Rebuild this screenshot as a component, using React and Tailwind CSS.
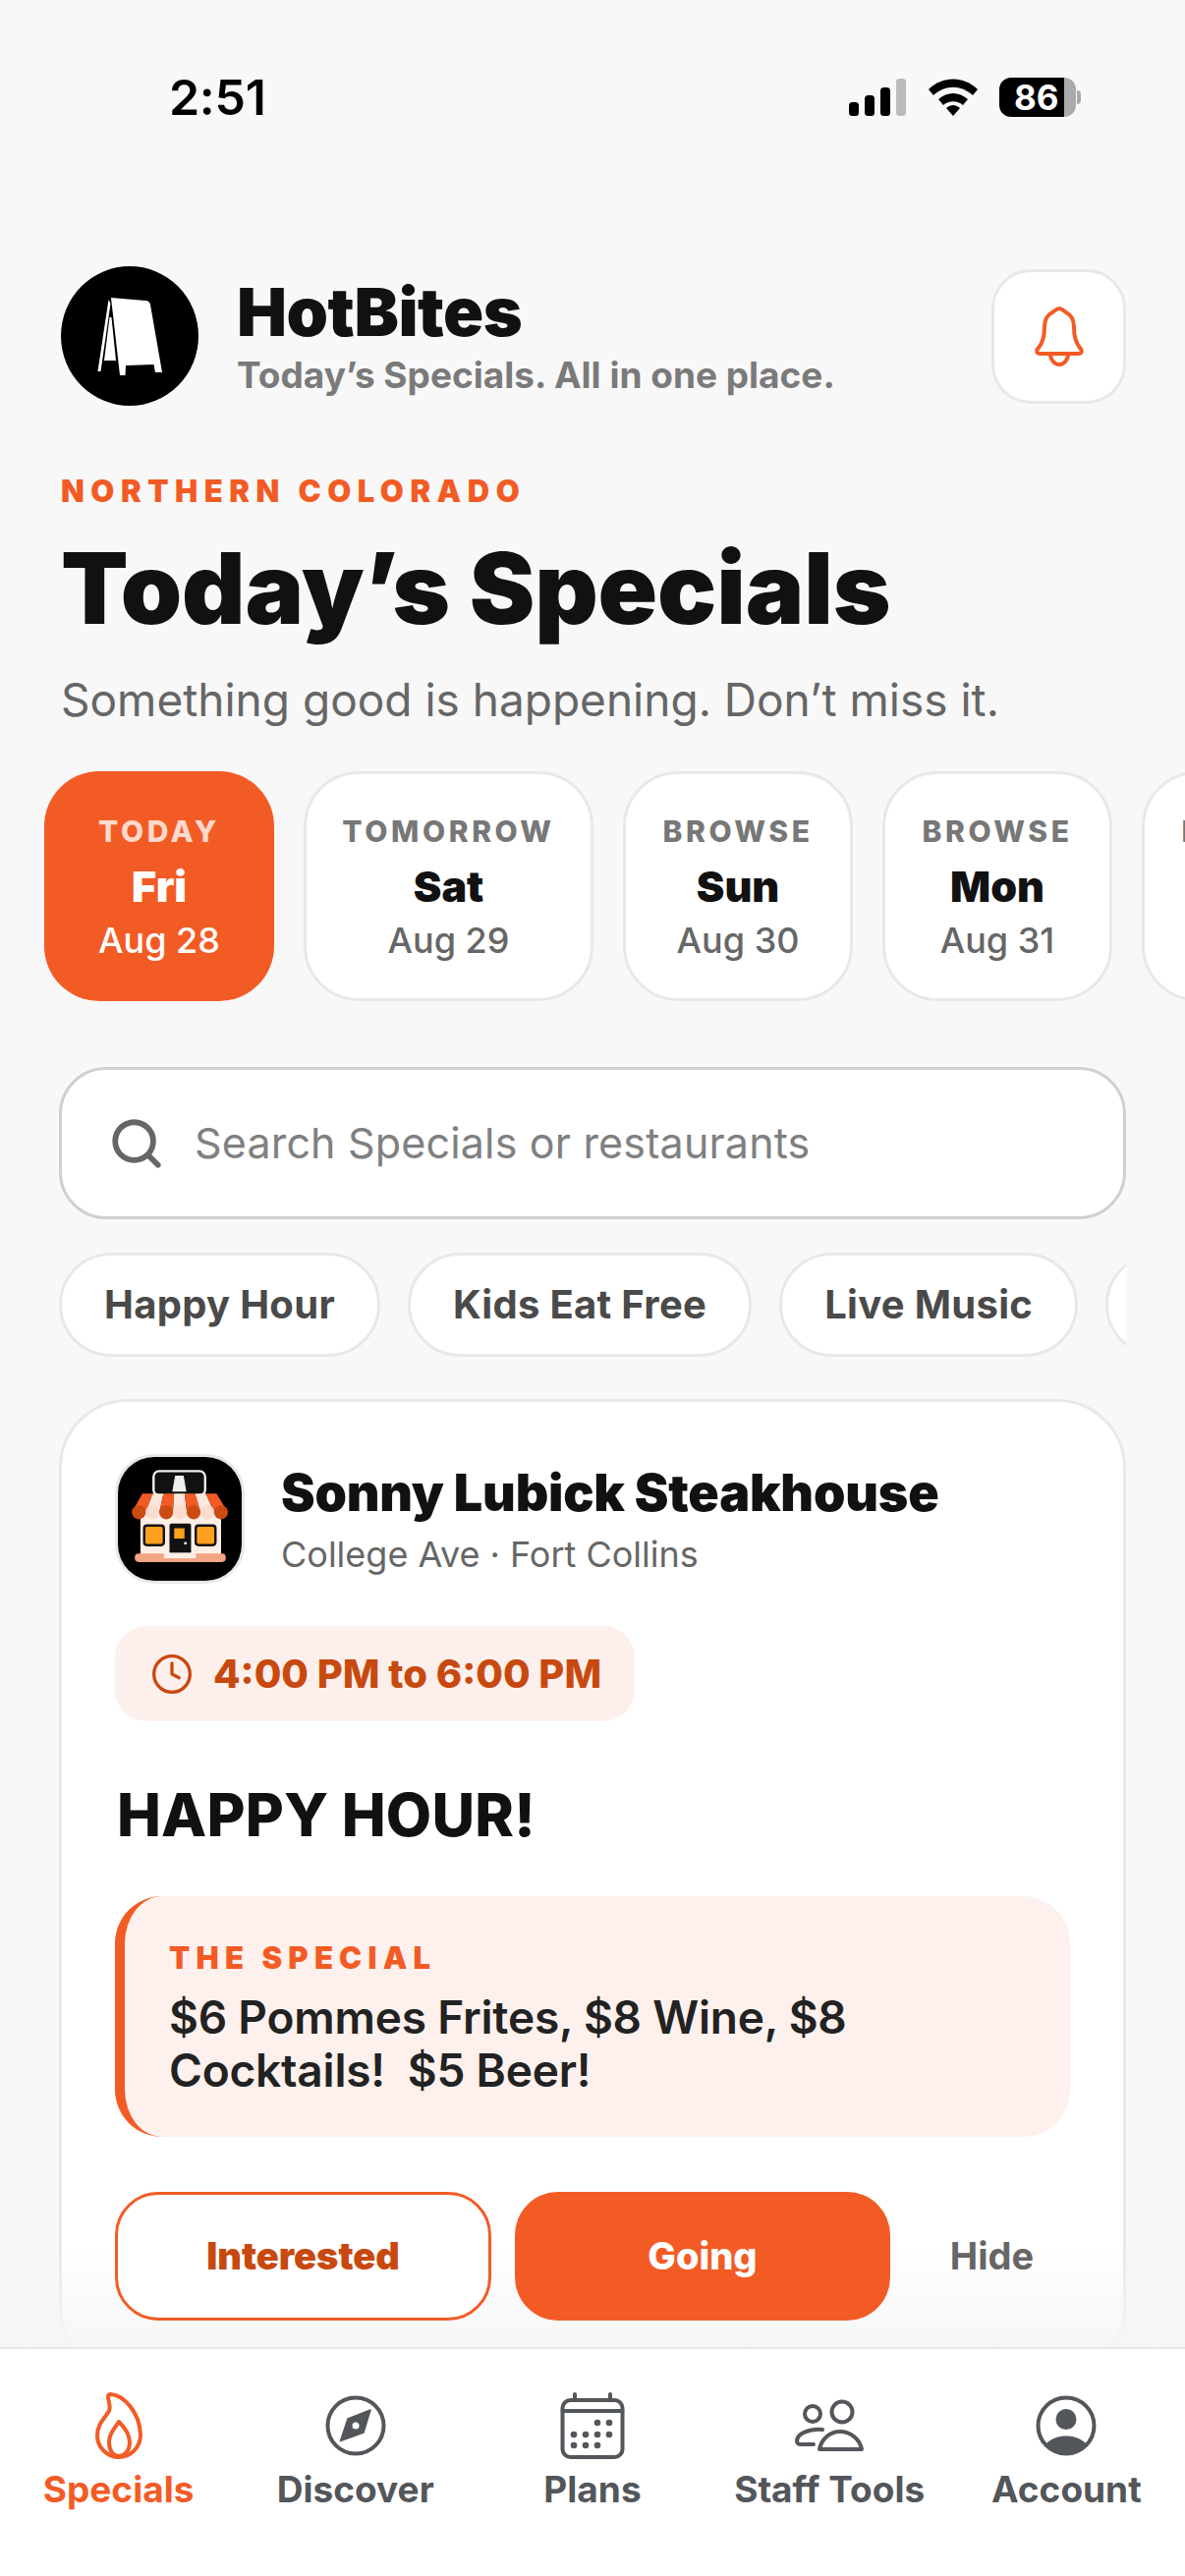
import { Search, Clock } from "lucide-react";

const days = [
  { top: "TODAY", day: "Fri", date: "Aug 28", active: true, w: "w-[234px]" },
  { top: "TOMORROW", day: "Sat", date: "Aug 29", w: "w-[295px]" },
  { top: "BROWSE", day: "Sun", date: "Aug 30", w: "w-[234px]" },
  { top: "BROWSE", day: "Mon", date: "Aug 31", w: "w-[234px]" },
  { top: "BROWSE", day: "Tue", date: "Sep 1", w: "w-[234px]" },
];

const filters = ["Happy Hour", "Kids Eat Free", "Live Music", "Trivia"];

function SignLogo() {
  return (
    <svg viewBox="0 0 140 142" className="w-[140px] h-[142px] shrink-0">
      <ellipse cx="70" cy="71" rx="70" ry="71" fill="#000" />
      <path d="M51 32 L86 35 Q90 35 91 39 L103 108 L96 108 L94.5 100 L66 101 L65.5 111 L60 111 Z" fill="#fff" />
      <path d="M48.5 34 L37.5 107 L40.5 107 L50.5 38 Z" fill="#fff" />
      <path d="M49.5 52 L44 96 L56 96 L51.5 52 Z" fill="#fff" />
    </svg>
  );
}

function ShopLogo() {
  const stripes = [0, 1, 2, 3, 4, 5, 6];
  return (
    <svg viewBox="0 0 132 132" className="w-[132px] h-[132px] shrink-0 rounded-[40px] border-[3px] border-[#e8e8ec]">
      <rect width="132" height="132" fill="#000" />
      <rect x="38" y="15" width="55" height="26" rx="6" fill="#111" stroke="#eee" strokeWidth="2.5" />
      <path d="M61 20 H70 L73 37 H58 Z" fill="#eee" />
      <rect x="24" y="60" width="86" height="45" fill="#fdeee6" />
      {stripes.map((i) => {
        const pale = i % 2 === 1;
        const t = 26 + i * 11.3;
        const b = 15 + i * 14.6;
        return <path key={i} d={`M${t} 39 H${t + 11.3} L${b + 14.6} 59 H${b} Z`} fill={pale ? "#fde6dc" : "#f35b25"} />;
      })}
      {stripes.map((i) => (
        <circle key={i} cx={22.3 + i * 14.6} cy="59" r="7.4" fill={i % 2 === 1 ? "#fbdccf" : "#cc4a14"} />
      ))}
      <rect x="28" y="73" width="21" height="21" rx="3" fill="#ffa01f" stroke="#111" strokeWidth="2.5" />
      <rect x="83" y="73" width="21" height="21" rx="3" fill="#ffa01f" stroke="#111" strokeWidth="2.5" />
      <rect x="55" y="71" width="23" height="32" rx="2" fill="#111" />
      <rect x="60" y="76" width="11" height="11" fill="#ffa01f" />
      <circle cx="72" cy="92" r="1.5" fill="#fff" />
      <rect x="18" y="103" width="97" height="9" rx="4" fill="#f2a583" />
      <rect x="49" y="102" width="34" height="6" fill="#fdeee6" />
    </svg>
  );
}

function BellIcon() {
  return (
    <svg viewBox="0 0 54 62" className="w-[54px] h-[62px]" fill="none" stroke="#f35b25" strokeWidth="4" strokeLinejoin="round" strokeLinecap="round">
      <path d="M27 3 C24 3 23 5 20 7 C14 10 12 15 12 22 C12 32 10 38 6 43 C3 46 4 49 8 49 H46 C50 49 51 46 48 43 C44 38 42 32 42 22 C42 15 40 10 34 7 C31 5 30 3 27 3 Z" />
      <path d="M18 49 C18 55 22 60 27 60 C32 60 36 55 36 49" />
    </svg>
  );
}

function NavIcon({ name, color }) {
  const line = { fill: "none", stroke: color, strokeWidth: 4, strokeLinecap: "round", strokeLinejoin: "round" };
  if (name === "flame")
    return (
      <svg viewBox="0 0 52 70" className="w-[52px] h-[70px]" {...line}>
        <path d="M18 3 C30 4 47 20 48 44 C48 57 38 67 26 67 C14 67 4 57 4 45 C4 33 12 27 16 20 C18 15 15 9 15 6 C15 4 16 3 18 3 Z" />
        <path d="M26 31 C32 37 37 44 37 52 C37 60 32 66 26 66 C20 66 16 60 16 52 C16 44 21 38 26 31 Z" />
      </svg>
    );
  if (name === "compass")
    return (
      <svg viewBox="0 0 64 64" className="w-[64px] h-[64px]" {...line}>
        <circle cx="32" cy="32" r="28.5" />
        <path d="M47 16 L40 39 L16.5 47.5 L24 25 Z" fill={color} stroke={color} strokeWidth="1.5" />
        <circle cx="32" cy="32" r="3.5" fill="#fff" stroke="none" />
      </svg>
    );
  if (name === "calendar")
    return (
      <svg viewBox="0 0 68 70" className="w-[68px] h-[70px]" {...line}>
        <rect x="3.5" y="9" width="61" height="58" rx="8" />
        <path d="M3.5 20 H64.5 M16 3 V9 M52 3 V9" />
        {[[39, 32], [51, 32], [15, 44], [27, 44], [39, 44], [51, 44], [15, 55], [27, 55], [39, 55]].map(([x, y]) => (
          <circle key={x + "-" + y} cx={x} cy={y} r="3.3" fill={color} stroke="none" />
        ))}
      </svg>
    );
  if (name === "users")
    return (
      <svg viewBox="0 0 72 60" className="w-[72px] h-[60px]" {...line}>
        <circle cx="19" cy="18" r="8" />
        <circle cx="49" cy="16" r="10.5" />
        <path d="M29 34 C15 33 3 38 3 46 C3 48 5 49 7 49 H20" />
        <path d="M26 54 C28 44 36 36 47 36 C58 36 67 44 69 54 Z" />
      </svg>
    );
  return (
    <svg viewBox="0 0 64 64" className="w-[64px] h-[64px]" {...line}>
      <circle cx="32" cy="32" r="28.5" />
      <circle cx="32" cy="25.5" r="10.5" fill={color} stroke="none" />
      <path d="M12 50 C17 45 24 42.5 32 42.5 C40 42.5 47 45 52 50 C47 57 40 60 32 60 C24 60 17 57 12 50 Z" fill={color} stroke="none" />
    </svg>
  );
}

const nav = [
  { label: "Specials", icon: "flame", color: "#f35b25" },
  { label: "Discover", icon: "compass", color: "#53565a" },
  { label: "Plans", icon: "calendar", color: "#53565a" },
  { label: "Staff Tools", icon: "users", color: "#53565a" },
  { label: "Account", icon: "account", color: "#53565a" },
];

export default function App() {
  return (
    <div className="w-[1206px] h-[2622px] bg-[#f8f8f8] flex flex-col overflow-hidden font-['Inter',sans-serif] text-[#111]">
      <main className="relative flex-1 min-h-0 overflow-hidden">
        {/* status bar */}
        <div className="flex items-center justify-between h-[46px] mt-[76px] pl-[172px] pr-[106px]">
          <span className="text-[50px] leading-none font-semibold text-black tracking-[-0.3px]">2:51</span>
          <div className="flex items-center">
            <svg viewBox="0 0 58 38" className="w-[58px] h-[38px]">
              <rect x="0" y="24" width="10" height="14" rx="3.5" fill="#000" />
              <rect x="16" y="17" width="10" height="21" rx="3.5" fill="#000" />
              <rect x="32" y="9" width="10" height="29" rx="3.5" fill="#000" />
              <rect x="48" y="0" width="10" height="38" rx="3.5" fill="#bbb" />
            </svg>
            <svg viewBox="0 0 50 38" className="w-[50px] h-[38px] ml-[23px]">
              <path d="M0 11 C14 -3 36 -3 50 11 L45 17 C33 6 17 6 5 17 Z M10 21 C19 13 31 13 40 21 L35 27 C29 22 21 22 15 27 Z M18 30 C23 26 27 26 32 30 L25 38 Z" fill="#000" />
            </svg>
            <div className="w-[78px] h-[40px] ml-[22px] rounded-[12px] bg-[linear-gradient(90deg,#000_84%,#aaa_84%)] flex items-center pl-[15px] text-white text-[35px] font-bold leading-none">
              86
            </div>
            <div className="w-[4px] h-[14px] ml-[1px] rounded-r-full bg-[#aaa]" />
          </div>
        </div>

        {/* header */}
        <div className="mt-[149px] ml-[62px] mr-[60px] flex items-center justify-between">
          <div className="flex items-center gap-[39px]">
            <SignLogo />
            <div>
              <div className="text-[68px] leading-[72px] font-black tracking-[-0.5px] text-[#111]">HotBites</div>
              <div className="text-[37px] leading-[44px] font-bold text-[#7a7a7a] mt-[7px]">Today’s Specials. All in one place.</div>
            </div>
          </div>
          <button className="w-[137px] h-[137px] bg-white rounded-[40px] border-[3px] border-[#e8e8ec] flex items-center justify-center">
            <BellIcon />
          </button>
        </div>

        {/* heading */}
        <div className="ml-[62px] mt-[69px]">
          <div className="text-[31px] leading-[36px] font-black tracking-[0.21em] text-[#f35b25]">NORTHERN COLORADO</div>
          <h1 className="text-[100px] leading-[110px] font-black tracking-[-0.15px] mt-[26px] text-[#111]">Today’s Specials</h1>
          <p className="text-[46px] leading-[58px] text-[#666] mt-[29px]">Something good is happening. Don’t miss it.</p>
        </div>

        {/* date chips */}
        <div className="flex gap-[30px] ml-[45px] mt-[44px]">
          {days.map((d, i) => (
            <div
              key={i}
              className={`${d.w} h-[234px] shrink-0 rounded-[56px] flex flex-col items-center justify-center pt-[2px] ${d.active ? "bg-[#f35b25] text-white" : "bg-white border-[3px] border-[#e8e8ec]"}`}
            >
              <div className={`text-[30px] leading-[36px] font-extrabold tracking-[0.12em] ${d.active ? "text-[#ffd9cc]" : "text-[#777]"}`}>{d.top}</div>
              <div className={`text-[43px] leading-[52px] font-black mt-[12px] ${d.active ? "text-white" : "text-[#111]"}`}>{d.day}</div>
              <div className={`text-[36px] leading-[44px] font-medium mt-[7px] ${d.active ? "text-white" : "text-[#666]"}`}>{d.date}</div>
            </div>
          ))}
        </div>

        {/* search */}
        <div className="mx-[60px] mt-[67px] h-[155px] bg-white rounded-[48px] border-[3px] border-[#d0d0d2] flex items-center pl-[47px] gap-[30px]">
          <Search size={58} color="#666" strokeWidth={2.4} />
          <span className="text-[43px] tracking-[0.17px] text-[#808080]">Search Specials or restaurants</span>
        </div>

        {/* filters */}
        <div className="mx-[60px] mt-[34px] flex gap-[28px] overflow-hidden">
          {filters.map((f) => (
            <div key={f} className="h-[106px] px-[43px] shrink-0 bg-white rounded-full border-[3px] border-[#e8e8ec] flex items-center text-[40px] font-bold tracking-[0.3px] text-[#4a4a4a]">
              {f}
            </div>
          ))}
        </div>

        {/* card */}
        <div className="mx-[60px] mt-[43px] h-[995px] bg-white rounded-[70px] border-[3px] border-[#e8e8ec] px-[54px] pt-[53px]">
          <div className="flex items-center gap-[37px]">
            <ShopLogo />
            <div>
              <div className="text-[52px] leading-[62px] font-black tracking-[-0.2px] text-[#111]">Sonny Lubick Steakhouse</div>
              <div className="text-[36px] leading-[44px] text-[#666] mt-[9px]">College Ave · Fort Collins</div>
            </div>
          </div>
          <div className="inline-flex items-center gap-[20px] h-[97px] mt-[43px] pl-[36px] pr-[34px] bg-[#fdf0ec] rounded-[32px]">
            <Clock size={44} color="#c8490f" strokeWidth={1.8} />
            <span className="text-[40px] font-extrabold text-[#c8490f]">4:00 PM to 6:00 PM</span>
          </div>
          <div className="text-[60px] leading-[72px] font-extrabold tracking-[0.2px] text-[#111] mt-[59px] ml-[2px]">HAPPY HOUR!</div>
          <div className="mt-[47px] h-[245px] bg-[#fef1ed] rounded-[48px] border-l-[10px] border-[#f35b25] pl-[45px] pt-[45px]">
            <div className="text-[31px] leading-[36px] font-black tracking-[0.2em] text-[#f35b25]">THE SPECIAL</div>
            <div className="text-[46px] leading-[54px] font-semibold text-[#222] mt-[15px] tracking-[-0.2px] whitespace-pre">{"$6 Pommes Frites, $8 Wine, $8\nCocktails!  $5 Beer!"}</div>
          </div>
          <div className="flex items-center gap-[24px] mt-[56px] relative z-10">
            <button className="w-[383px] h-[131px] rounded-[44px] border-[3px] border-[#f35b25] text-[38px] font-black text-[#c8490f] bg-white">Interested</button>
            <button className="w-[382px] h-[131px] rounded-[44px] bg-[#f35b25] text-[38px] font-extrabold text-white">Going</button>
            <button className="flex-1 text-[38px] font-bold text-[#666]">Hide</button>
          </div>
        </div>

        {/* fade over the scroll edge */}
        <div className="absolute left-0 right-0 bottom-0 h-[100px] bg-gradient-to-b from-transparent to-[#f6f6f6]" />
      </main>

      {/* bottom nav */}
      <nav className="h-[233px] shrink-0 bg-white border-t-2 border-[#e8e8ec] grid grid-cols-5 pt-[43px] content-start">
        {nav.map((n) => (
          <div key={n.label} className="flex flex-col items-center gap-[8px]">
            <div className="h-[70px] flex items-center justify-center">
              <NavIcon name={n.icon} color={n.color} />
            </div>
            <span className="text-[37px] leading-[44px] font-bold whitespace-nowrap" style={{ color: n.color }}>{n.label}</span>
          </div>
        ))}
      </nav>
    </div>
  );
}
